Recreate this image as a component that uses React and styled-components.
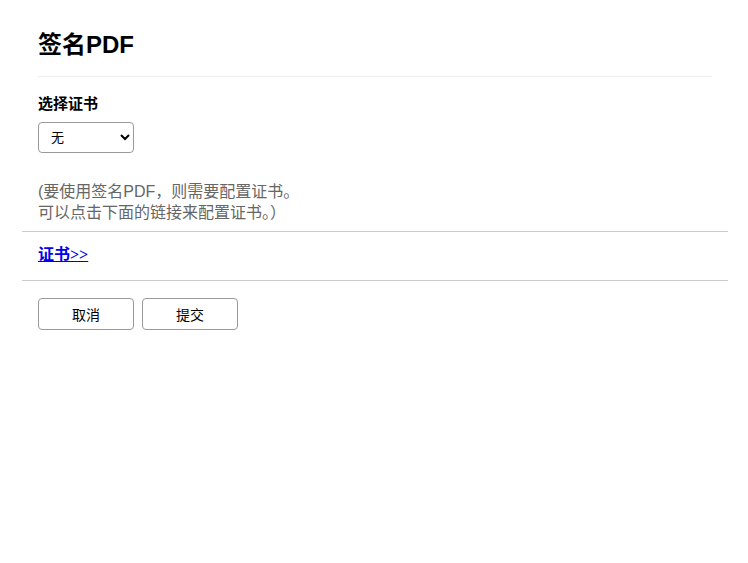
import React from "react";
import styled, { createGlobalStyle } from "styled-components";

const GlobalStyle = createGlobalStyle`
  body {
    margin: 0;
    background: #fff;
    font-family: "Liberation Sans", "Noto Sans CJK SC", sans-serif;
    color: #000;
  }
`;

const Page = styled.div`
  padding: 20px 20px 20px 22px;
`;

const Section = styled.div`
  padding: 0 16px;
`;

const Title = styled.h1`
  margin: 0;
  padding: 8px 0 14px;
  font-size: 24px;
  font-weight: bold;
  line-height: 34px;
  border-bottom: 1px solid #eee;
`;

const Label = styled.div`
  margin-top: 16px;
  font-size: 15px;
  font-weight: bold;
  line-height: 22px;
`;

const Select = styled.select`
  margin-top: 7px;
  width: 96px;
  height: 31px;
  padding: 0 6px 0 8px;
  font-size: 13px;
  font-family: "Liberation Sans", "Noto Sans CJK SC", sans-serif;
  border: 1px solid #999;
  border-radius: 4px;
  background: #fff;
  color: #000;
`;

const Note = styled.p`
  margin: 28px 0 0;
  font-size: 16px;
  line-height: 21px;
  color: #666;
  padding-bottom: 8px;
`;

const Divider = styled.div`
  border-top: 1px solid #ccc;
`;

const LinkRow = styled.div`
  padding: 12px 16px 14px;
  line-height: 22px;
`;

const CertLink = styled.a`
  font-family: "Liberation Serif", "Noto Sans CJK SC", serif;
  font-size: 16px;
  font-weight: bold;
  color: #00e;
  text-decoration: underline;
`;

const Buttons = styled.div`
  display: flex;
  gap: 8px;
  padding: 17px 16px 0;
`;

const Button = styled.button`
  width: 96px;
  height: 32px;
  font-size: 14px;
  font-family: "Liberation Sans", "Noto Sans CJK SC", sans-serif;
  background: #fff;
  color: #000;
  border: 1px solid #999;
  border-radius: 4px;
`;

export default function App() {
  return (
    <>
      <GlobalStyle />
      <Page>
        <Section>
          <Title>签名PDF</Title>
          <Label>选择证书</Label>
          <Select defaultValue="none">
            <option value="none">无</option>
          </Select>
          <Note>
            (要使用签名PDF，则需要配置证书。
            <br />
            可以点击下面的链接来配置证书。）
          </Note>
        </Section>
        <Divider />
        <LinkRow>
          <CertLink href="#">证书&gt;&gt;</CertLink>
        </LinkRow>
        <Divider />
        <Buttons>
          <Button>取消</Button>
          <Button>提交</Button>
        </Buttons>
      </Page>
    </>
  );
}
